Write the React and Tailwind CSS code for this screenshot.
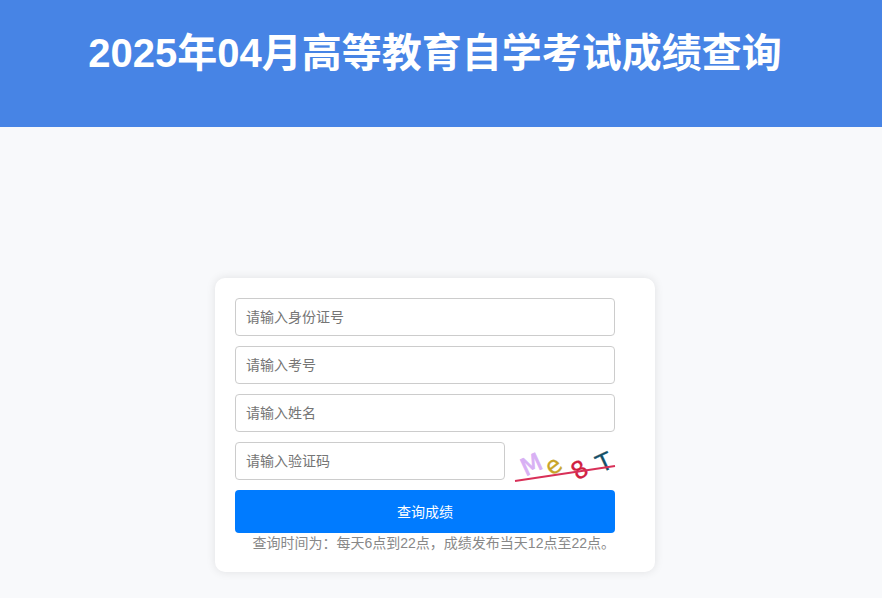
function Field({ label, className }) {
  return (
    <input
      type="text"
      aria-label={label}
      placeholder={label}
      className={`h-[38px] rounded border border-[#ccc] bg-white px-2.5 text-sm text-black placeholder:text-[#757575] ${className}`}
    />
  );
}

function Captcha() {
  return (
    <svg
      viewBox="0 0 100 40"
      className="-mb-0.5 h-10 w-[100px] shrink-0 overflow-visible font-['DejaVu_Sans',sans-serif]"
      textAnchor="middle"
      role="img"
      aria-label="验证码"
    >
      <g fontSize="24">
        <text transform="translate(20 30) rotate(-25)" fill="#d8b0f4" stroke="#d8b0f4" strokeWidth="0.8">M</text>
        <text transform="translate(43 30) rotate(-38)" fill="#c8a428" stroke="#c8a428" strokeWidth="0.3">e</text>
        <text transform="translate(69 35) rotate(-32)" fill="#d02040" stroke="#d02040" strokeWidth="0.3">8</text>
        <text transform="translate(93 28) rotate(-25)" fill="#145068" stroke="#145068" strokeWidth="0.3">T</text>
      </g>
      <path d="M0 39L100 24" stroke="#d83058" strokeWidth="2" />
    </svg>
  );
}

export default function App() {
  return (
    <div className="min-h-screen bg-[#f8f9fb] font-['Liberation_Sans','Noto_Sans_CJK_SC',sans-serif]">
      <header className="bg-[#4784e5] pt-7 pr-3 pb-12 text-center text-white">
        <h1 className="text-[40px] leading-[51px] font-bold">2025年04月高等教育自学考试成绩查询</h1>
      </header>

      <main className="pt-[151px] pr-3 pb-6">
        <form
          className="mx-auto w-full max-w-[440px] rounded-[10px] bg-white pt-5 pr-10 pb-[19px] pl-5 shadow-[0_0_10px_rgba(0,0,0,0.1)]"
          onSubmit={(e) => e.preventDefault()}
        >
          <div className="flex flex-col gap-2.5">
            <Field label="请输入身份证号" className="w-full" />
            <Field label="请输入考号" className="w-full" />
            <Field label="请输入姓名" className="w-full" />
            <div className="flex gap-2.5">
              <Field label="请输入验证码" className="min-w-0 flex-1" />
              <Captcha />
            </div>
            <button type="submit" className="h-[43px] w-full rounded bg-[#007bff] text-sm text-white">
              查询成绩
            </button>
          </div>
          <p className="text-right text-sm leading-5 text-[#888]">
            查询时间为：每天6点到22点，成绩发布当天12点至22点。
          </p>
        </form>
      </main>
    </div>
  );
}
